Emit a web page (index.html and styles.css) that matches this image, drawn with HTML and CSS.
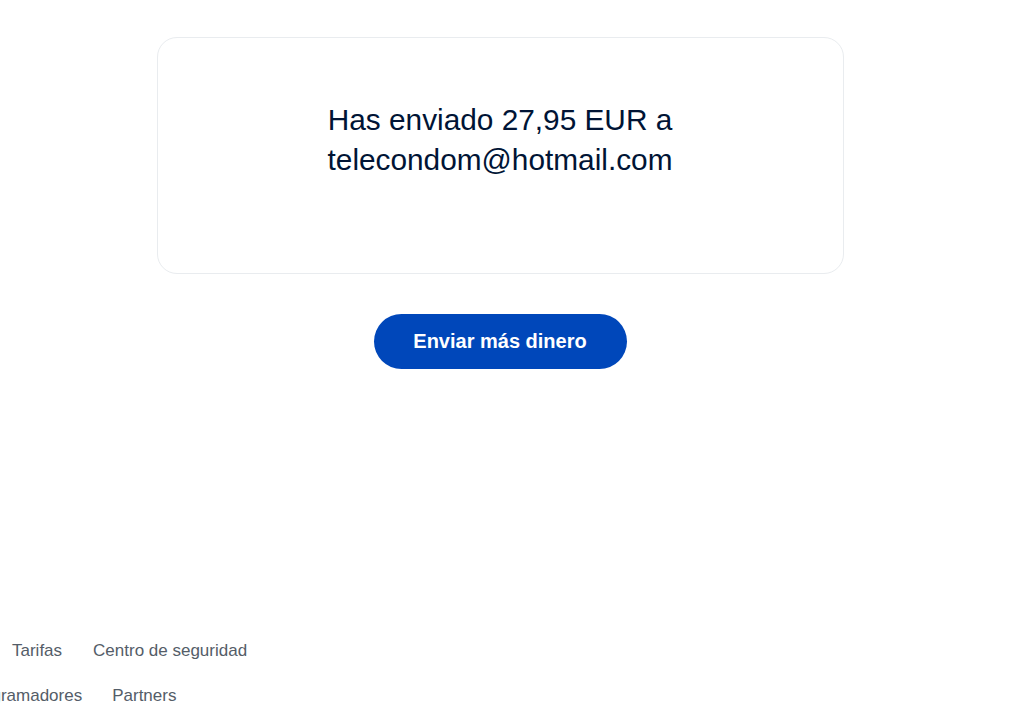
FILE: index.html
```html
<!DOCTYPE html>
<html lang="es">
<head>
  <meta charset="UTF-8" />
  <title>Pago enviado</title>
  <meta name="viewport" content="width=device-width, initial-scale=1.0" />
  <link rel="stylesheet" href="styles.css">
</head>
<body>
  <main class="page">
    <div class="card">
      <h1 class="card-title">Has enviado 27,95 EUR a<br>telecondom@hotmail.com</h1>
    </div>

    <button class="btn-primary">Enviar más dinero</button>
  </main>

  <footer class="footer">
    <ul class="footer-row first">
      <li><a href="#">Tarifas</a></li>
      <li><a href="#">Centro de seguridad</a></li>
    </ul>
    <ul class="footer-row second">
      <li><a href="#">Programadores</a></li>
      <li><a href="#">Partners</a></li>
    </ul>
  </footer>
</body>
</html>
```

FILE: styles.css
```css
* {
  box-sizing: border-box;
}

html, body {
  overflow: hidden;
}

body {
  margin: 0;
  font-family: 'Liberation Sans', Arial, sans-serif;
  background: #ffffff;
  color: #001435;
  height: 711px;
  display: flex;
  flex-direction: column;
}

.page {
  display: flex;
  flex-direction: column;
  align-items: center;
  padding-top: 37px;
  padding-right: 19px;
}

.card {
  width: 687px;
  height: 237px;
  border: 1px solid #e9ecef;
  border-radius: 20px;
  padding-top: 62px;
  text-align: center;
}

.card-title {
  margin: 0;
  font-size: 29.8px;
  font-weight: 400;
  line-height: 40px;
  color: #001435;
}

.btn-primary {
  margin-top: 40px;
  width: 253px;
  height: 55px;
  border: none;
  border-radius: 28px;
  background: #0047ba;
  color: #ffffff;
  font-family: 'Liberation Sans', Arial, sans-serif;
  font-size: 20px;
  font-weight: 700;
  cursor: pointer;
}

.footer {
  margin-top: auto;
  padding-bottom: 5px;
}

.footer-row {
  list-style: none;
  margin: 0;
  padding: 0;
  display: flex;
  gap: 31px;
  font-size: 17px;
  line-height: 20px;
}

.footer-row.first {
  margin-left: 12px;
  margin-bottom: 25px;
}

.footer-row.second {
  margin-left: -35px;
  gap: 30px;
}

.footer-row a {
  color: #545d68;
  text-decoration: none;
}
```
